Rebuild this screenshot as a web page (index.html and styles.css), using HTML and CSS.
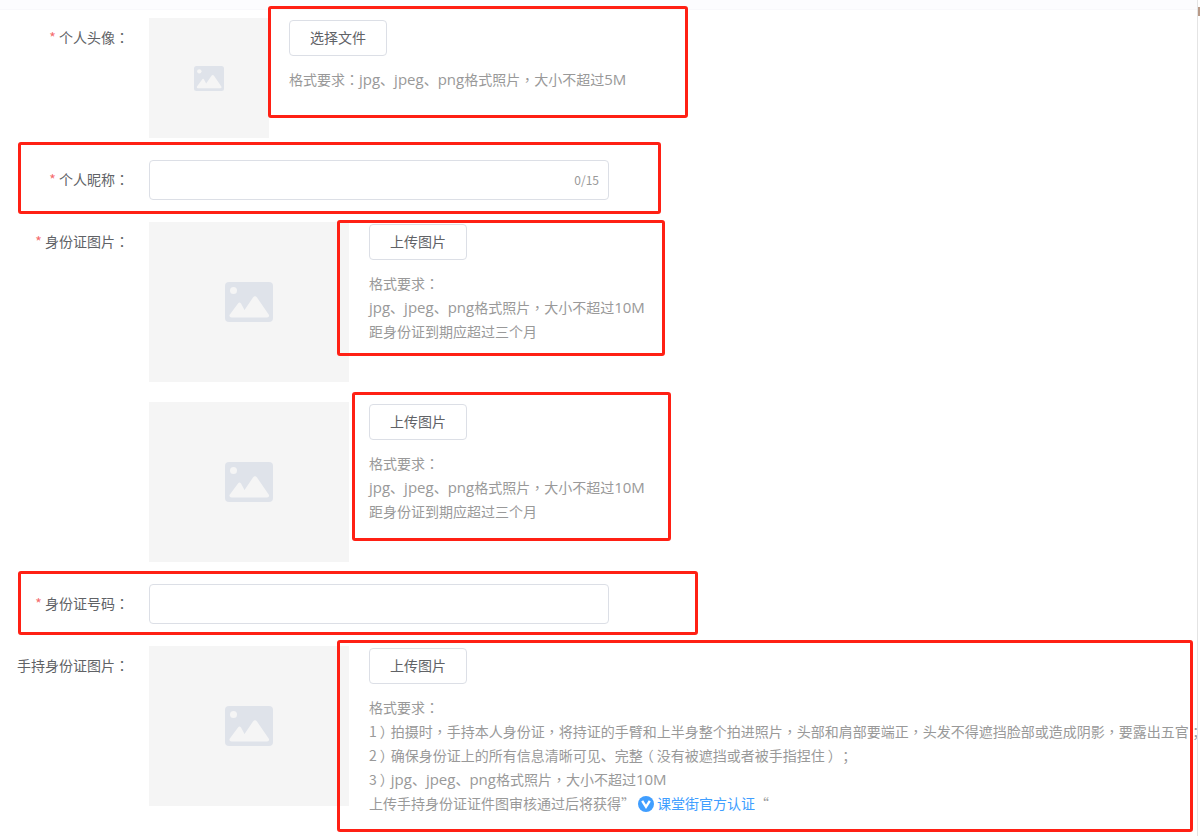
FILE: index.html
```html
<!DOCTYPE html>
<html>
<head>
<meta charset="utf-8">
<title>个人信息</title>
<link rel="stylesheet" href="styles.css">
</head>
<body>
<div class="topbar"></div>
<form class="form">
  <div class="row row-avatar">
    <label class="label"><span class="star">*</span> 个人头像<span class="pc">：</span></label>
    <div class="pic pic-small">
      <svg class="ph ph-small" viewBox="0 0 48 40"><use href="#ph"></use></svg>
    </div>
    <div class="side">
      <button type="button" class="btn">选择文件</button>
      <p class="hint">格式要求<span class="pc">：</span><span class="lat">jpg</span>、<span class="lat">jpeg</span>、<span class="lat">png</span>格式照片<span class="pc">，</span>大小不超过<span class="lat">5M</span></p>
    </div>
  </div>
  <div class="row row-input">
    <label class="label"><span class="star">*</span> 个人昵称<span class="pc">：</span></label>
    <div class="input"><span class="count">0/15</span></div>
  </div>
  <div class="row row-pic">
    <label class="label"><span class="star">*</span> 身份证图片<span class="pc">：</span></label>
    <div class="pic">
      <svg class="ph" viewBox="0 0 48 40"><use href="#ph"></use></svg>
    </div>
    <div class="side">
      <button type="button" class="btn">上传图片</button>
      <div class="hint">
        <p>格式要求<span class="pc">：</span></p>
        <p><span class="lat">jpg</span>、<span class="lat">jpeg</span>、<span class="lat">png</span>格式照片<span class="pc">，</span>大小不超过<span class="lat">10M</span></p>
        <p>距身份证到期应超过三个月</p>
      </div>
    </div>
  </div>
  <div class="row row-pic2">
    <label class="label"></label>
    <div class="pic">
      <svg class="ph" viewBox="0 0 48 40"><use href="#ph"></use></svg>
    </div>
    <div class="side">
      <button type="button" class="btn">上传图片</button>
      <div class="hint">
        <p>格式要求<span class="pc">：</span></p>
        <p><span class="lat">jpg</span>、<span class="lat">jpeg</span>、<span class="lat">png</span>格式照片<span class="pc">，</span>大小不超过<span class="lat">10M</span></p>
        <p>距身份证到期应超过三个月</p>
      </div>
    </div>
  </div>
  <div class="row row-input">
    <label class="label"><span class="star">*</span> 身份证号码<span class="pc">：</span></label>
    <div class="input"></div>
  </div>
  <div class="row row-pic">
    <label class="label">手持身份证图片<span class="pc">：</span></label>
    <div class="pic">
      <svg class="ph" viewBox="0 0 48 40"><use href="#ph"></use></svg>
    </div>
    <div class="side side-wide">
      <button type="button" class="btn">上传图片</button>
      <div class="hint">
        <p>格式要求<span class="pc">：</span></p>
        <p>1<span class="pm">）</span>拍摄时<span class="pc">，</span>手持本人身份证<span class="pc">，</span>将持证的手臂和上半身整个拍进照片<span class="pc">，</span>头部和肩部要端正<span class="pc">，</span>头发不得遮挡脸部或造成阴影<span class="pc">，</span>要露出五官<span class="pm">；</span></p>
        <p>2<span class="pm">）</span>确保身份证上的所有信息清晰可见、完整<span class="pm">（</span>没有被遮挡或者被手指捏住<span class="pm">）</span><span class="pm">；</span></p>
        <p>3<span class="pm">）</span><span class="lat">jpg</span>、<span class="lat">jpeg</span>、<span class="lat">png</span>格式照片<span class="pc">，</span>大小不超过<span class="lat">10M</span></p>
        <p>上传手持身份证证件图审核通过后将获得”<svg class="v-badge" viewBox="0 0 16 16"><circle cx="8" cy="8" r="8" fill="#409eff"></circle><path d="M4.200 4.800 8 10.800l3.800-6" fill="none" stroke="#fff" stroke-width="2.400"></path></svg><span class="link">课堂街官方认证</span><span class="quote">“</span></p>
      </div>
    </div>
  </div>
</form>
<svg class="defs" width="0" height="0" aria-hidden="true">
  <symbol id="ph" viewBox="0 0 48 40">
    <rect width="48" height="40" rx="4" fill="#dfe3ea"></rect>
    <circle cx="8.500" cy="8.500" r="3.500" fill="#f5f5f5"></circle>
    <path d="M4.500 33 13 21.500q1.500-2 3 0l3.500 6.500L28 15.500q2-2.500 4 0L44 33q.5 2.500-2 2.500H6.500Q4 35.500 4.500 33Z" fill="#f5f5f5"></path>
  </symbol>
</svg>
<div class="mark mark-1"></div>
<div class="mark mark-2"></div>
<div class="mark mark-3"></div>
<div class="mark mark-4"></div>
<div class="mark mark-5"></div>
<div class="mark mark-6"></div>
<div class="edge"><div class="edge-thumb"></div></div>
</body>
</html>
```
FILE: styles.css
```css
html, body { margin: 0; padding: 0; }
body {
  width: 1200px;
  height: 836px;
  overflow: hidden;
  position: relative;
  background: #fff;
  font-family: "Noto Sans CJK SC", sans-serif;
  font-size: 14px;
  color: #606266;
}
p { margin: 0; }
.pc { font-family: "Noto Sans CJK TC", sans-serif; }
.pm { display: inline-block; width: 14px; text-align: center; font-feature-settings: "palt"; }
.lat { font-family: "Open Sans", sans-serif; font-size: 15px; line-height: 1; }
.topbar { height: 10px; background: #fcfcfe; border-bottom: 1px solid #f8f8fb; box-sizing: border-box; }
.form { display: flex; flex-direction: column; padding-top: 8px; }
.row { display: flex; align-items: flex-start; }
.row-avatar { height: 120px; margin-bottom: 22px; }
.row-input { height: 40px; margin-bottom: 22px; }
.row-pic { height: 160px; margin-bottom: 22px; }
.row-pic2 { height: 160px; margin-bottom: 22px; }
.row:nth-child(3) { margin-bottom: 20px; }
.label {
  width: 129px;
  flex: none;
  box-sizing: border-box;
  margin-right: 20px;
  text-align: right;
  line-height: 38px;
  white-space: nowrap;
}
.star { color: #f56c6c; }
.pic {
  width: 200px;
  height: 160px;
  flex: none;
  display: flex;
  align-items: center;
  justify-content: center;
  background: #f5f5f5;
}
.pic-small { width: 120px; height: 120px; }
.ph { width: 48px; height: 40px; }
.ph-small { width: 30px; height: 25px; }
.side { margin-left: 20px; padding-top: 2px; white-space: nowrap; }
.btn {
  display: block;
  width: 98px;
  height: 36px;
  padding: 0 0 2px;
  background: #fff;
  border: 1px solid #dcdfe6;
  border-radius: 4px;
  font: inherit;
  color: #606266;
}
.hint { margin-top: 11px; color: #999; line-height: 24px; }
.input {
  width: 460px;
  height: 40px;
  box-sizing: border-box;
  border: 1px solid #dcdfe6;
  border-radius: 4px;
  display: flex;
  align-items: center;
  justify-content: flex-end;
  padding: 0 9px 2px 0;
}
.count { font-size: 12px; color: #999; }
.v-badge { width: 16px; height: 16px; margin: 0 3px 0 3px; vertical-align: -3px; }
.link { color: #409eff; }
.defs { position: absolute; }
.mark {
  position: absolute;
  box-sizing: border-box;
  border: 3px solid #ff2014;
  border-radius: 3px;
}
.mark-1 { left: 268px; top: 6px; width: 420px; height: 112px; }
.mark-2 { left: 18px; top: 142px; width: 643px; height: 72px; }
.mark-3 { left: 337px; top: 220px; width: 328px; height: 136px; }
.mark-4 { left: 352px; top: 392px; width: 319px; height: 149px; }
.mark-5 { left: 18px; top: 571px; width: 680px; height: 64px; }
.mark-6 { left: 337px; top: 640px; width: 856px; height: 192px; }
.edge {
  position: absolute;
  top: 0;
  right: 0;
  bottom: 0;
  width: 3px;
  box-sizing: border-box;
  background: #fff;
  border-left: 1px solid #e4e4e4;
}
.edge-thumb { width: 2px; height: 9px; margin-top: 7px; background: #b89a88; }
```
